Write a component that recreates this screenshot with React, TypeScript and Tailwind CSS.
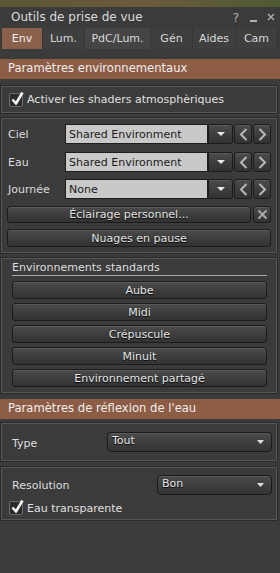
import React from "react";

const btn =
  "flex items-center justify-center rounded-[3px] border border-[#1c1c1c] bg-linear-to-b from-[#4b4b4b] to-[#323232] text-[#e6e6e6] [text-shadow:0_1px_1px_#000] shadow-[inset_0_1px_0_#5a5a5a]";
const panel = "ml-[1px] w-[276px] border border-[#575757] shadow-[0_0_0_1px_#2a2a2a]";

function Check() {
  return (
    <div className="relative w-[14px] h-[14px] rounded-[2px] border border-[#6b6b6b] bg-[#2b2b2b] shrink-0">
      <svg className="absolute left-[1px] top-[-3px]" width="13" height="15" viewBox="0 0 13 15">
        <path d="M1.5 8.5 L5 12.5 L11.5 1.5" fill="none" stroke="#f2f2f2" strokeWidth="2.6" strokeLinejoin="round" />
      </svg>
    </div>
  );
}

function Tri({ small }: { small?: boolean }) {
  return small ? (
    <svg width="7" height="4" viewBox="0 0 7 4">
      <polygon points="0,0 7,0 3.5,4" fill="#e0e0e0" />
    </svg>
  ) : (
    <svg width="8" height="4" viewBox="0 0 8 4">
      <polygon points="0,0 8,0 4,4" fill="#e8e8e8" />
    </svg>
  );
}

function Chev({ dir }: { dir: "l" | "r" }) {
  return (
    <svg width="9" height="13" viewBox="0 0 9 13">
      <path
        d={dir === "l" ? "M7.5 1 L2 6.5 L7.5 12" : "M1.5 1 L7 6.5 L1.5 12"}
        fill="none"
        stroke="#b8b8b8"
        strokeWidth="2"
      />
    </svg>
  );
}

function ComboRow({ label, value, mt }: { label: string; value: string; mt: string }) {
  return (
    <div className={`flex items-center h-[20px] ${mt}`}>
      <div className="w-[63px] pl-[6px] text-[#dcdcdc]">{label}</div>
      <div className="w-[143px] h-[20px] bg-[#c9c9c9] border border-[#1e1e1e] text-[#1c1c1c] pl-[3px] flex items-center">
        {value}
      </div>
      <div className={`${btn} w-[25px] h-[20px] rounded-l-none`}>
        <Tri />
      </div>
      <div className={`${btn} w-[18px] h-[20px] ml-[1px]`}>
        <Chev dir="l" />
      </div>
      <div className={`${btn} w-[18px] h-[20px] ml-[1px]`}>
        <Chev dir="r" />
      </div>
    </div>
  );
}

function DarkDrop({ value, w }: { value: string; w: string }) {
  return (
    <div
      className={`${w} h-[20px] rounded-[4px] border border-[#1a1a1a] bg-linear-to-b from-[#4a4a4a] to-[#343434] shadow-[inset_0_1px_0_#5a5a5a] text-[#e6e6e6] flex items-center justify-between pl-[4px] pr-[7px] [text-shadow:0_1px_1px_#000]`}
    >
      <span className="-mt-[3px]">{value}</span>
      <Tri small />
    </div>
  );
}

export default function App() {
  const tabs = [
    { t: "Env", w: "w-[41px]", sel: true },
    { t: "Lum.", w: "w-[42px]" },
    { t: "PdC/Lum.", w: "w-[66px]", light: true },
    { t: "Gén", w: "w-[42px]" },
    { t: "Aides", w: "w-[43px]" },
    { t: "Cam", w: "w-[42px]" },
  ];
  return (
    <div className="w-[280px] h-[573px] overflow-hidden bg-[#3b3b3b] text-[11px] text-[#e2e2e2] flex flex-col font-['DejaVu_Sans',sans-serif] leading-none">
      <div className="h-[7px] shrink-0 bg-linear-to-r from-[#5a5636] via-[#6b5a3c] to-[#4f5a34]" />
      <div className="h-[21px] shrink-0 flex items-center pl-[11px] pr-[4px] text-[12px] text-[#dadada]">
        <span className="flex-1 -mt-[2px]">Outils de prise de vue</span>
        <span className="text-[#b0b0b0] text-[12px] mr-[11px]">?</span>
        <div className="w-[7px] h-[2px] bg-[#b0b0b0] mt-[6px] mr-[10px]" />
        <svg width="8" height="8" viewBox="0 0 8 8" className="mr-[1px] -mt-[2px]">
          <path d="M1 1 L7 7 M7 1 L1 7" stroke="#b0b0b0" strokeWidth="1.4" />
        </svg>
      </div>
      <div className="h-[21px] shrink-0 flex pl-[2px]">
        {tabs.map((x) => (
          <div
            key={x.t}
            className={`${x.w} h-full flex items-center justify-center border-r border-[#363636] ${
              x.sel ? "bg-[#8a5f4c] text-[#f0f0f0]" : x.light ? "bg-[#454545] text-[#d8d8d8]" : "bg-[#3f3f3f] text-[#d8d8d8]"
            }`}
          >
            {x.t}
          </div>
        ))}
      </div>
      <div className="h-[10px] shrink-0" />
      <div className="h-[20px] shrink-0 bg-[#8d5c44] pl-[8px] flex items-center text-[11.6px] text-[#efefef]">
        Paramètres environnementaux
      </div>

      <div className={`${panel} mt-[7px] h-[27px] flex items-center pl-[7px] gap-[4px] shrink-0`}>
        <Check />
        <span className="text-[#e0e0e0]">Activer les shaders atmosphèriques</span>
      </div>

      <div className={`${panel} mt-[5px] h-[135px] pt-[5px] flex flex-col shrink-0`}>
        <ComboRow label="Ciel" value="Shared Environment" mt="" />
        <ComboRow label="Eau" value="Shared Environment" mt="mt-[8px]" />
        <ComboRow label="Journée" value="None" mt="mt-[7px]" />
        <div className="flex mt-[7px] ml-[5px]">
          <div className={`${btn} w-[244px] h-[17px]`}>Éclairage personnel...</div>
          <div className={`${btn} w-[18px] h-[17px] ml-[2px]`}>
            <svg width="11" height="11" viewBox="0 0 11 11">
              <path d="M1.5 1.5 L9.5 9.5 M9.5 1.5 L1.5 9.5" stroke="#a8a8a8" strokeWidth="2" />
            </svg>
          </div>
        </div>
        <div className={`${btn} w-[264px] h-[18px] ml-[5px] mt-[6px]`}>Nuages en pause</div>
      </div>

      <div className={`${panel} mt-[5px] h-[135px] flex flex-col pl-[10px] shrink-0`}>
        <div className="w-[255px] h-[17px] border-b border-[#a8a8a8] flex items-center pt-[1px] text-[#dedede]">
          Environnements standards
        </div>
        <div className="flex flex-col gap-[4px] mt-[5px]">
          {["Aube", "Midi", "Crépuscule", "Minuit", "Environnement partagé"].map((b) => (
            <div key={b} className={`${btn} w-[255px] h-[18px]`}>
              {b}
            </div>
          ))}
        </div>
      </div>

      <div className="mt-[6px] h-[20px] shrink-0 bg-[#8d5c44] pl-[8px] flex items-center text-[11.6px] text-[#efefef]">
        Paramètres de réflexion de l'eau
      </div>

      <div className={`${panel} mt-[4px] h-[38px] flex items-center pl-[10px] shrink-0`}>
        <span className="w-[95px] text-[#dedede] mt-[2px]">Type</span>
        <DarkDrop value="Tout" w="w-[165px]" />
      </div>

      <div className={`${panel} mt-[6px] h-[53px] flex flex-col shrink-0`}>
        <div className="flex items-center mt-[7px] pl-[10px]">
          <span className="w-[145px] text-[#dedede] mt-[1px]">Resolution</span>
          <DarkDrop value="Bon" w="w-[115px]" />
        </div>
        <div className="flex items-center gap-[4px] pl-[7px] mt-[6px]">
          <Check />
          <span className="text-[#e0e0e0]">Eau transparente</span>
        </div>
      </div>
    </div>
  );
}
